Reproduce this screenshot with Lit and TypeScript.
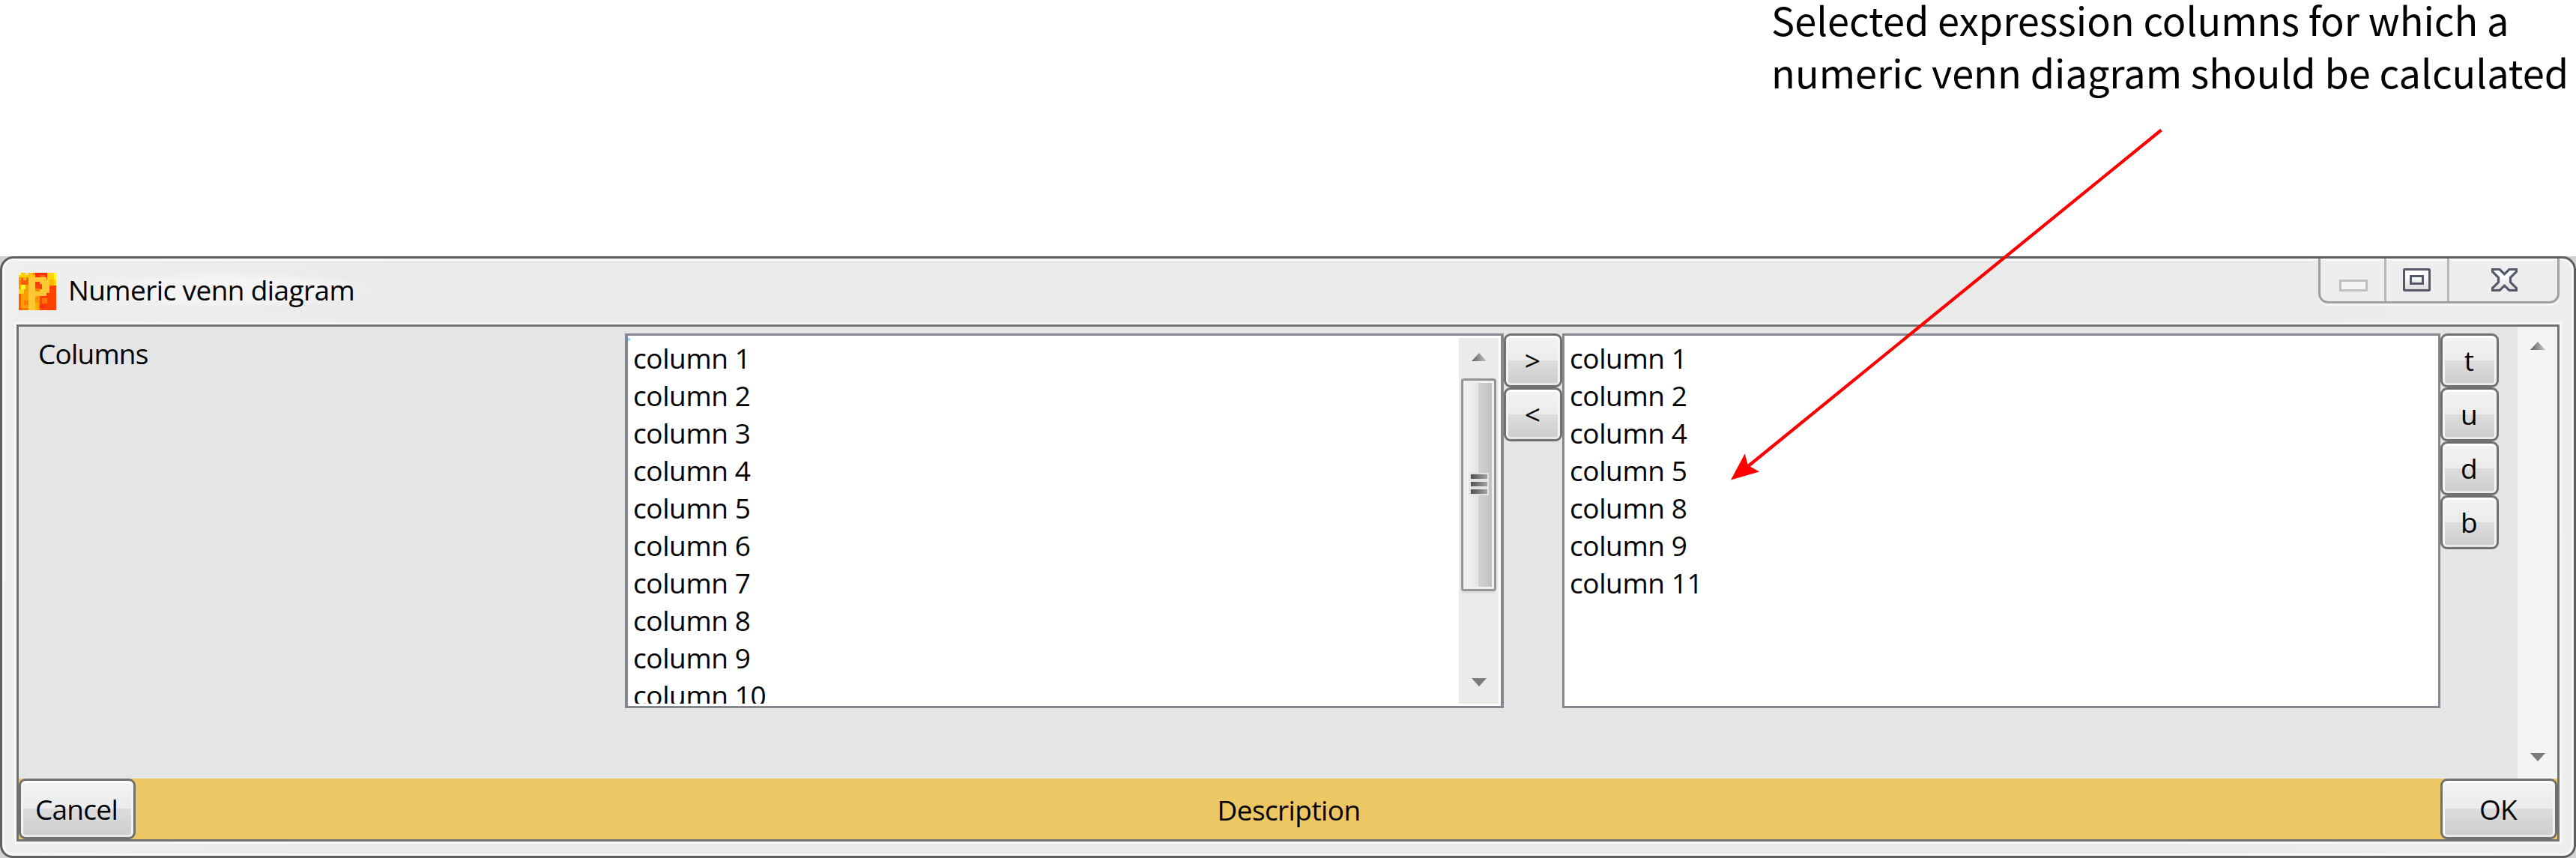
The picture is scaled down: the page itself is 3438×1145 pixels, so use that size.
import { LitElement, css, html, svg } from "lit";

const available = Array.from({ length: 10 }, (_, i) => `column ${i + 1}`);
const selected = [1, 2, 4, 5, 8, 9, 11].map((n) => `column ${n}`);

// Blocks of the application icon: x, y, width, height, fill.
const iconBlocks: [number, number, number, number, string][] = [
  [0, 0, 38, 150, "#ff9d00"],
  [0, 0, 38, 18, "#ffd000"],
  [0, 0, 10, 10, "#fff8b0"],
  [10, 20, 28, 28, "#ff5f00"],
  [0, 29, 10, 19, "#ff8a00"],
  [18, 20, 11, 10, "#ffc400"],
  [10, 48, 18, 18, "#ffff20"],
  [0, 66, 20, 18, "#ffd21a"],
  [0, 84, 10, 66, "#ff5f00"],
  [20, 112, 18, 18, "#ff7800"],
  [10, 140, 28, 10, "#ff7400"],
  [28, 0, 12, 10, "#ffdca0"],
  [38, 0, 28, 18, "#ffc010"],
  [56, 0, 10, 10, "#ff8000"],
  [66, 0, 48, 18, "#ff2d10"],
  [84, 10, 20, 9, "#ff6a00"],
  [114, 0, 36, 50, "#ffd400"],
  [140, 0, 10, 28, "#ffff20"],
  [120, 28, 20, 20, "#ffb800"],
  [66, 92, 18, 58, "#ff9000"],
  [66, 120, 12, 30, "#ffb000"],
  [92, 102, 22, 22, "#ff7600"],
  [84, 130, 18, 10, "#ff2a18"],
  [66, 36, 18, 14, "#ff3a10"],
  [66, 64, 18, 11, "#ff8400"],
];

/** Glossy push button with a caption. */
class PushButton extends LitElement {
  static properties = {
    label: { type: String },
  };

  static override styles = css`
    :host {
      display: flex;
    }
    .button {
      flex: 1;
      display: flex;
      align-items: center;
      justify-content: center;
      box-sizing: border-box;
      padding: 0 2px 0 0;
      border: 3px solid #707070;
      border-radius: 9px;
      background: linear-gradient(#f3f3f3, #ebebeb 50%, #dddddd 50%, #cdcdcd);
      box-shadow:
        inset 0 3px #ffffff,
        inset 3px 0 #f4f4f4,
        inset -3px 0 #f4f4f4,
        inset 0 -3px #e8e8e8;
      color: #000;
      font: 37px/50px "Open Sans", "Noto Sans", sans-serif;
      letter-spacing: -0.7px;
    }
  `;

  declare label: string;

  override render() {
    return html`<button class="button">${this.label}</button>`;
  }
}

class ScrollBar extends LitElement {
  static properties = {
    thumb: { type: Boolean },
  };

  static override styles = css`
    :host {
      display: flex;
      flex-direction: column;
      align-items: center;
      box-sizing: border-box;
      padding: 19px 0 22px;
    }
    .arrow {
      display: block;
      flex: none;
      width: 22px;
      height: 12px;
    }
    .gap {
      flex: 1;
    }
    .thumb {
      display: flex;
      flex: none;
      flex-direction: column;
      align-items: center;
      justify-content: center;
      gap: 4px;
      box-sizing: border-box;
      width: 47px;
      height: 284px;
      margin-top: 23px;
      padding-bottom: 3px;
      border: 3px solid #949494;
      border-radius: 4px;
      background: linear-gradient(90deg, #f4f4f4, #e6e6e6 48%, #d2d2d2 48%, #bebebe);
      box-shadow:
        inset 0 0 0 3px #f0f0f0,
        0 3px #dedede;
    }
    .grip {
      width: 22px;
      height: 6px;
      background: linear-gradient(90deg, #4c5250, #a4a4a4);
      box-shadow: 0 0 0 2px #e4e4e4;
    }
  `;

  declare thumb: boolean;

  override render() {
    return html`
      <svg class="arrow" viewBox="0 0 22 12">
        <linearGradient id="up"><stop stop-color="#606060" /><stop offset="1" stop-color="#c4c4c4" /></linearGradient>
        <path d="M1 12 11 1l10 11z" fill="url(#up)" />
      </svg>
      ${this.thumb
        ? html`<div class="thumb">
            <div class="grip"></div>
            <div class="grip"></div>
            <div class="grip"></div>
          </div>`
        : ""}
      <div class="gap"></div>
      <svg class="arrow" viewBox="0 0 22 12">
        <path d="M1 0h20L11 11z" fill="#7c7c7c" />
      </svg>
    `;
  }
}

class AppRoot extends LitElement {
  static override styles = css`
    :host {
      display: flex;
      flex-direction: column;
      position: relative;
      box-sizing: border-box;
      width: 3438px;
      height: 1145px;
      overflow: hidden;
      background: #fff;
      color: #000;
      font: 37px/50px "Open Sans", "Noto Sans", sans-serif;
      letter-spacing: -0.6px;
    }
    .note {
      flex: none;
      box-sizing: border-box;
      height: 351px;
      margin: -9px 0 0;
      padding-left: 2364px;
      font: 52.3px/69.5px "Noto Sans CJK SC", sans-serif;
      letter-spacing: 0;
      white-space: pre;
    }
    .backdrop {
      flex: 1;
      display: flex;
      background: #d2d2d2;
    }
    .window {
      flex: 1;
      display: flex;
      flex-direction: column;
      border: 3px solid #5f5f5f;
      border-radius: 18px 18px 17px 17px;
      background: linear-gradient(100deg, #efefef, #eaeaea 15%, #eaeaea 85%, #eeeeee);
      box-shadow: inset 0 0 0 3px #f8f8f8;
    }
    .titlebar {
      flex: none;
      display: flex;
      align-items: flex-start;
      height: 88px;
      padding: 0 19px 0 22px;
    }
    .app-icon {
      width: 50px;
      height: 50px;
      margin-top: 19px;
    }
    .title {
      margin: 17px 0 0 16px;
      padding-right: 40px;
      background: radial-gradient(closest-side, #f4f4f4 60%, transparent);
    }
    .controls {
      display: flex;
      box-sizing: border-box;
      height: 60px;
      margin-left: auto;
      border: 3px solid #a0a0a0;
      border-top: 0;
      border-radius: 0 0 13px 13px;
      background: #eeeeee;
      box-shadow:
        inset 0 3px #f8f8f8,
        0 3px #f7f7f7;
    }
    .control {
      display: flex;
      align-items: flex-start;
      justify-content: center;
      box-sizing: border-box;
      padding-top: 13px;
      border-right: 3px solid #b8b8b8;
    }
    .control svg {
      display: block;
    }
    .minimize {
      width: 88px;
      padding-left: 3px;
    }
    .maximize {
      width: 84px;
    }
    .close {
      width: 144px;
      padding-left: 3px;
      border-right: 0;
    }
    .client {
      flex: 1;
      display: flex;
      flex-direction: column;
      margin: 0 19px 19px;
      border: 3px solid #727272;
      background: #e5e5e5;
      box-shadow: 0 0 0 3px #f7f7f7;
    }
    .form {
      display: flex;
      align-items: flex-start;
      height: 603px;
    }
    .label {
      width: 809px;
      box-sizing: border-box;
      padding: 11px 0 0 26px;
      letter-spacing: -0.8px;
    }
    .list {
      display: flex;
      justify-content: space-between;
      box-sizing: border-box;
      height: 500px;
      margin-top: 9px;
      padding: 3px 0;
      border: 3px solid #828790;
      background: #fff;
    }
    .available {
      width: 1173px;
      padding-right: 3px;
      border-width: 3px 4px;
      /* focus marker in the first row's corner */
      background: linear-gradient(#9bd8ff, #9bd8ff) 0 3px / 3px 4px no-repeat #fff;
    }
    .selected {
      width: 1172px;
    }
    .rows {
      margin: 0;
      padding: 2px 0 0 7px;
      overflow: hidden;
      list-style: none;
      letter-spacing: -0.4px;
    }
    .row {
      height: 50px;
    }
    .list-scroll {
      width: 53px;
      background: #ebebeb;
    }
    .stack {
      display: flex;
      flex-direction: column;
      width: 78px;
      margin-top: 9px;
    }
    .stack push-button {
      height: 72px;
    }
    .form-scroll {
      width: 53px;
      height: 603px;
      margin-left: 25px;
      background: #f4f4f4;
    }
    .footer {
      flex: 1;
      display: flex;
      align-items: stretch;
      background: #edc764;
    }
    .footer push-button {
      width: 156px;
    }
    .description {
      flex: 1;
      padding: 17px 0 0 2px;
      text-align: center;
    }
    .pointer {
      position: absolute;
      left: 2300px;
      top: 165px;
    }
  `;

  override render() {
    return html`
      <p class="note">Selected expression columns for which a
numeric venn diagram should be calculated</p>
      <div class="backdrop">
        <div class="window">${this._titlebar()} ${this._client()}</div>
      </div>
      <svg class="pointer" width="590" height="480" viewBox="2300 165 590 480">
        <path d="M2884.5 173.5 2332 623" fill="none" stroke="#f00" stroke-width="4.2" />
        <path d="M2310 640.500 2328.700 605.500 2333 621 2348 629.500z" fill="#f00" />
      </svg>
    `;
  }

  private _titlebar() {
    return html`
      <header class="titlebar">
        <svg class="app-icon" viewBox="0 0 150 150" shape-rendering="crispEdges">
          <rect width="150" height="150" fill="#ff4200" />
          ${iconBlocks.map(([x, y, w, h, fill]) => svg`<rect x=${x} y=${y} width=${w} height=${h} fill=${fill} />`)}
          <path
            d="M38 18H112V28H122V82H112V92H66V150H38ZM66 36V75H84V66H93V46H84V36Z"
            fill="#ffc834"
            fill-rule="evenodd"
          />
        </svg>
        <div class="title">Numeric venn diagram</div>
        <div class="controls">
          <div class="control minimize">
            <svg width="38" height="31" viewBox="0 0 38 31">
              <rect x="1.500" y="16.500" width="35" height="13" fill="#f5f5f5" stroke="#c0c0c0" stroke-width="3" />
            </svg>
          </div>
          <div class="control maximize">
            <svg width="37" height="31" viewBox="0 0 37 31">
              <linearGradient id="pane" x2="0" y2="1">
                <stop offset="0.300" stop-color="#fff" /><stop offset="1" stop-color="#dcdcdc" />
              </linearGradient>
              <g fill="url(#pane)" stroke="#55586a" stroke-width="3">
                <rect x="1.500" y="1.500" width="34" height="28" rx="1" />
                <rect x="10.500" y="10.500" width="16" height="10" />
              </g>
            </svg>
          </div>
          <div class="control close">
            <svg width="35" height="31" viewBox="0 0 11 10" preserveAspectRatio="none">
              <linearGradient id="cross" x2="0" y2="1">
                <stop offset="0.300" stop-color="#fff" /><stop offset="1" stop-color="#dcdcdc" />
              </linearGradient>
              <path
                d="M.5.5h3l2 2 2-2h3v1L8 4v2l2.500 2.500v1h-3l-2-2-2 2h-3v-1L3 6V4L.5 1.500z"
                fill="url(#cross)"
                stroke="#55586a"
              />
            </svg>
          </div>
        </div>
      </header>
    `;
  }

  private _rows(items: string[]) {
    return html`<ul class="rows">
      ${items.map((item) => html`<li class="row">${item}</li>`)}
    </ul>`;
  }

  private _client() {
    return html`
      <div class="client">
        <div class="form">
          <div class="label">Columns</div>
          <div class="list available">
            ${this._rows(available)}
            <scroll-bar class="list-scroll" thumb></scroll-bar>
          </div>
          <div class="stack">
            ${[">", "<"].map((s) => html`<push-button label=${s}></push-button>`)}
          </div>
          <div class="list selected">${this._rows(selected)}</div>
          <div class="stack">
            ${["t", "u", "d", "b"].map((s) => html`<push-button label=${s}></push-button>`)}
          </div>
          <scroll-bar class="form-scroll"></scroll-bar>
        </div>
        <footer class="footer">
          <push-button label="Cancel"></push-button>
          <div class="description">Description</div>
          <push-button label="OK"></push-button>
        </footer>
      </div>
    `;
  }
}

customElements.define("push-button", PushButton);
customElements.define("scroll-bar", ScrollBar);
customElements.define("app-root", AppRoot);
